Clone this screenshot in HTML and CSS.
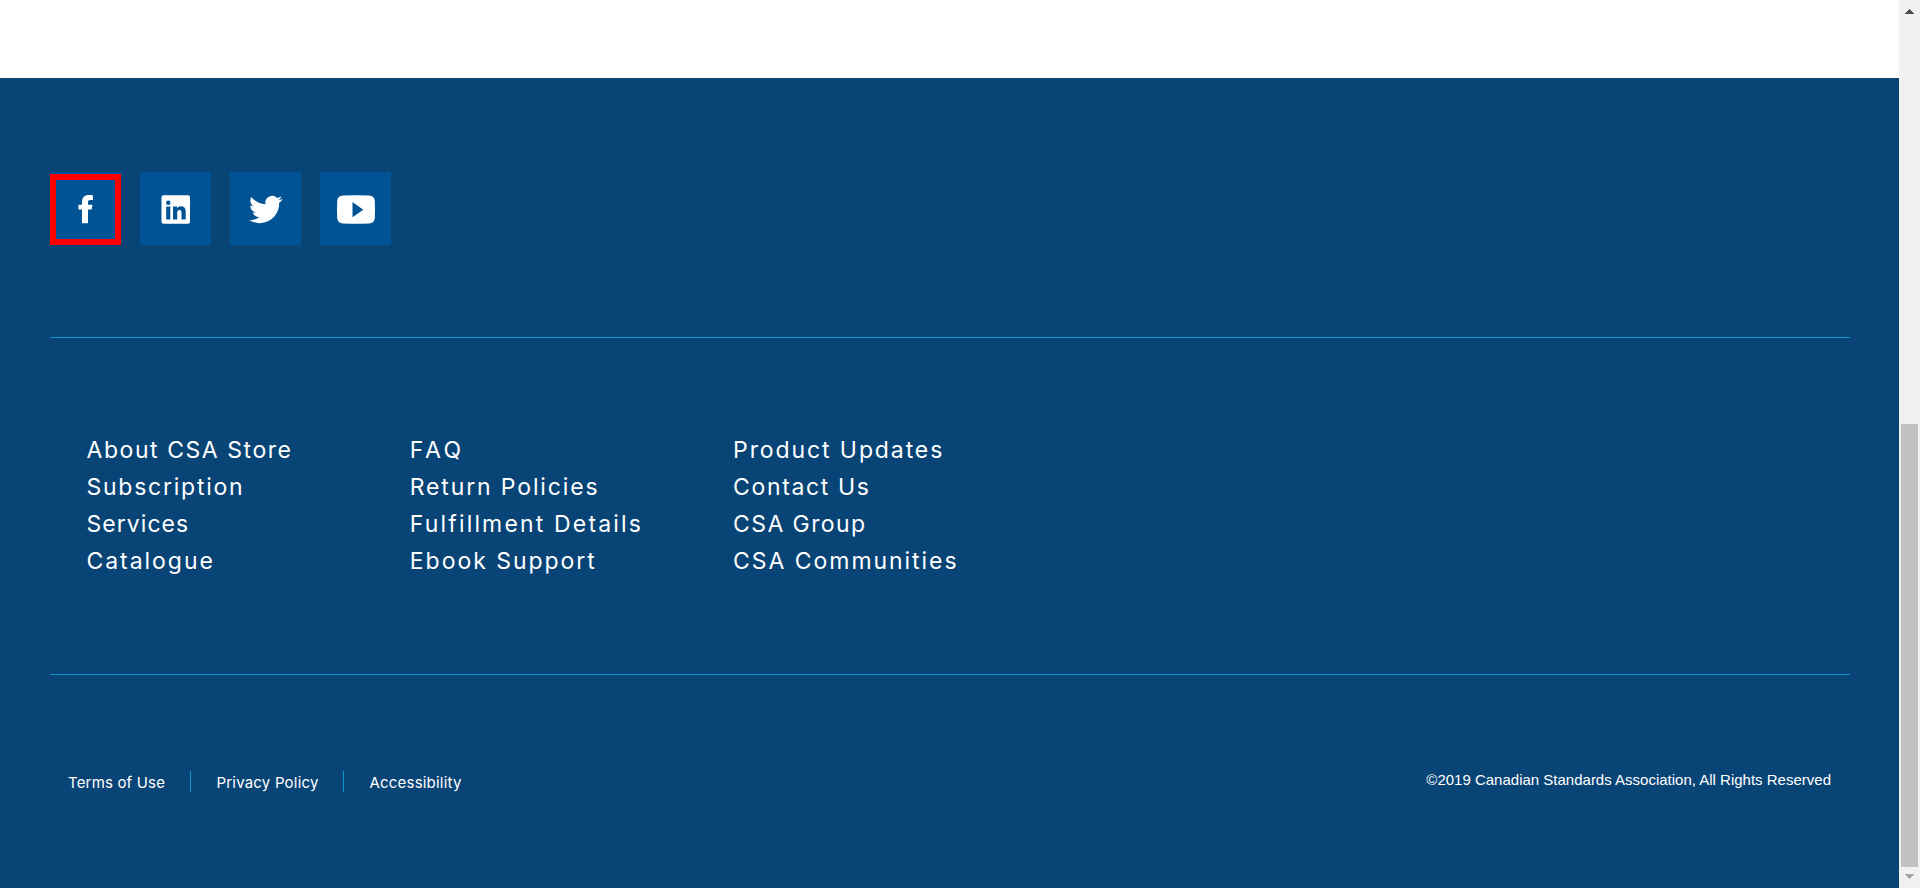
FILE: index.html
```html
<!DOCTYPE html>
<html lang="en">
<head>
<meta charset="utf-8">
<title>CSA Store</title>
<link rel="stylesheet" href="styles.css">
</head>
<body>
<div class="window">
  <div class="page">
    <main class="content"></main>
    <footer class="footer">
      <div class="social">
        <a class="tile highlighted" aria-label="Facebook"><svg class="icon" viewBox="0 0 71 73"><path d="M32 51.300V37.600h-3.500v-4.800H32v-2.900c0-4.600 2.800-6.900 6.700-6.900 1.900 0 3.500.1 4.200.2v4.800h-2.700c-1.900 0-2.200 1-2.200 2.300v2.500h4.400l-.7 4.800H38v13.700z"/></svg></a>
        <a class="tile" aria-label="LinkedIn"><svg class="icon" viewBox="0 0 71 73"><path fill-rule="evenodd" d="M23.500 23.200h24.500a2 2 0 0 1 2 2v24.500a2 2 0 0 1-2 2H23.500a2 2 0 0 1-2-2V25.200a2 2 0 0 1 2-2zM26.200 34.500h4.100v12.900h-4.100zM28.300 28.600a2.200 2.200 0 1 0 0 4.400 2.200 2.200 0 0 0 0-4.400zM33 34.500v12.900h4.200v-6.500c0-1.900.6-3 2.200-3 1.700 0 2.100 1.300 2.100 3v6.500h4.200v-7.200c0-3.800-1.200-6-4.700-6-1.900 0-3.200.9-3.900 2.100v-1.800z"/></svg></a>
        <a class="tile" aria-label="Twitter"><svg class="icon" viewBox="0 0 71 73"><path transform="translate(19 20.700) scale(1.400)" d="M23.950 4.570a10 10 0 0 1-2.820.770 4.960 4.960 0 0 0 2.160-2.720c-.95.550-2 .950-3.130 1.180a4.920 4.920 0 0 0-8.380 4.480C7.690 8.090 4.070 6.130 1.640 3.160a4.820 4.820 0 0 0-.67 2.480c0 1.700.870 3.200 2.190 4.080a4.900 4.900 0 0 1-2.230-.620v.060a4.920 4.920 0 0 0 3.950 4.830 5 5 0 0 1-2.210.080 4.940 4.940 0 0 0 4.600 3.420A9.870 9.870 0 0 1 0 19.540a13.990 13.990 0 0 0 7.550 2.210c9.050 0 14-7.500 14-13.980 0-.210 0-.420-.02-.630a9.940 9.940 0 0 0 2.460-2.550z"/></svg></a>
        <a class="tile" aria-label="YouTube"><svg class="icon" viewBox="0 0 71 73"><path fill-rule="evenodd" d="M23 23.500Q36 22.800 49 23.500Q54.500 23.700 54.800 29Q55.200 37.500 54.800 46Q54.500 51.200 49 51.500Q36 52.200 23 51.500Q17.500 51.200 17.200 46Q16.800 37.500 17.200 29Q17.500 23.700 23 23.500zM32.500 30v15.300L43.300 37.700z"/></svg></a>
      </div>
      <nav class="links">
        <ul class="column">
          <li class="about">About CSA Store</li>
          <li class="subscription">Subscription</li>
          <li class="services">Services</li>
          <li class="catalogue">Catalogue</li>
        </ul>
        <ul class="column">
          <li class="faq">FAQ</li>
          <li class="returns">Return Policies</li>
          <li class="fulfillment">Fulfillment Details</li>
          <li class="ebook">Ebook Support</li>
        </ul>
        <ul class="column">
          <li class="updates">Product Updates</li>
          <li class="contact">Contact Us</li>
          <li class="group">CSA Group</li>
          <li class="communities">CSA Communities</li>
        </ul>
      </nav>
      <div class="legal">
        <ul class="policies">
          <li class="terms">Terms of Use</li>
          <li class="privacy">Privacy Policy</li>
          <li class="access">Accessibility</li>
        </ul>
        <p class="copyright">©2019 Canadian Standards Association, All Rights Reserved</p>
      </div>
    </footer>
  </div>
  <div class="scrollbar">
    <svg class="arrow" viewBox="0 0 21 17"><path fill="#505050" d="M6 14h9l-4.500-5z"/></svg>
    <div class="track"><div class="thumb"></div></div>
    <svg class="arrow" viewBox="0 0 21 17"><path fill="#a3a3a3" d="M6 3h9l-4.500 5z"/></svg>
  </div>
</div>
</body>
</html>
```
FILE: styles.css
```css
* { box-sizing: border-box; margin: 0; padding: 0; }
body { overflow: hidden; background: #fff; }
ul { list-style: none; }

.window { display: flex; height: 888px; }
.page { flex: 1; display: flex; flex-direction: column; }
.content { height: 78px; }
.footer {
  flex: 1;
  padding: 0 49px 0 50px;
  background: #084476;
  color: #fff;
  font-family: Inter, "Open Sans", sans-serif;
}

.social { display: flex; gap: 19px; height: 260px; padding-top: 94px; border-bottom: 1px solid #0b96cb; }
.tile { position: relative; width: 71px; height: 73px; background: #005496; }
.highlighted::after { content: ""; position: absolute; inset: 2px 0 0; border: 6px solid #f00; }
.icon { display: block; width: 71px; height: 73px; fill: #fff; }

.links { display: flex; height: 337px; padding: 94px 0 0 36.500px; border-bottom: 1px solid #0b96cb; }
.column { width: 323.300px; font-size: 23px; line-height: 37px; white-space: nowrap; }
.about { letter-spacing: 1.550px; }
.subscription { letter-spacing: 1.750px; }
.services { letter-spacing: 1.050px; }
.catalogue { letter-spacing: 1.950px; }
.faq { letter-spacing: 3.600px; }
.returns { letter-spacing: 1.850px; }
.fulfillment { letter-spacing: 2.160px; }
.ebook { letter-spacing: 1.970px; }
.updates { letter-spacing: 1.900px; }
.contact { letter-spacing: 1.640px; }
.group { letter-spacing: 1.400px; }
.communities { letter-spacing: 1.950px; }

.legal { display: flex; justify-content: space-between; padding: 96px 19px 0 18px; }
.policies { display: flex; font-size: 15px; line-height: 24px; white-space: nowrap; }
.policies li { height: 21px; }
.terms { width: 123px; border-right: 1px solid #0b96cb; letter-spacing: .17px; }
.privacy { width: 153px; padding-left: 25.500px; border-right: 1px solid #0b96cb; letter-spacing: .2px; }
.access { padding-left: 25.500px; letter-spacing: .2px; }
.copyright { font: 15px/18px "Liberation Sans", Arial, sans-serif; }

.scrollbar { display: flex; flex-direction: column; width: 21px; padding: 0; background: #f1f1f1; }
.arrow { display: block; width: 21px; height: 17px; flex: none; shape-rendering: crispEdges; }
.track { flex: 1; display: flex; align-items: flex-end; padding: 0 2px 4px; }
.thumb { width: 17px; height: 443px; background: #c1c1c1; }
```
